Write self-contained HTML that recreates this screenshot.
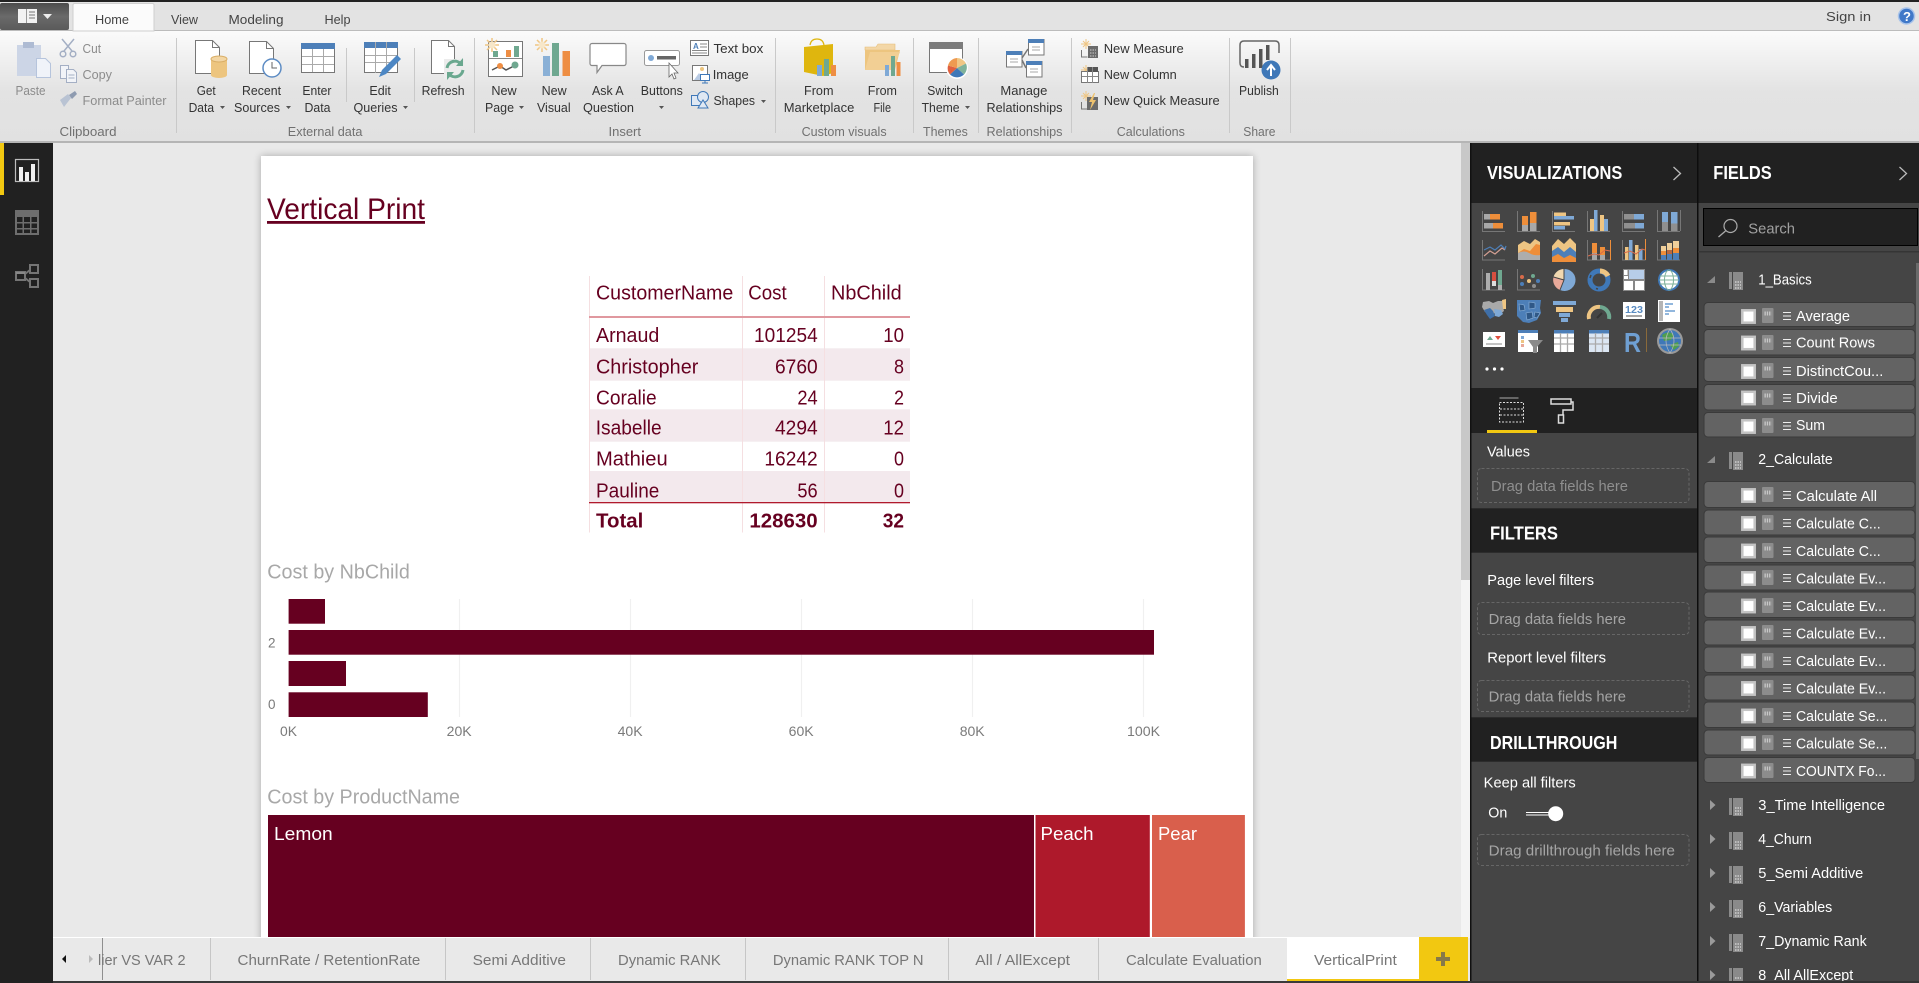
<!DOCTYPE html>
<html lang="en">
<head>
<meta charset="utf-8">
<title>Vertical Print</title>
<style>
html,body{margin:0;padding:0;width:1919px;height:983px;overflow:hidden;background:#e9e9e9}
svg{display:block;font-family:"Liberation Sans",sans-serif}
text{white-space:pre}
.t{font-size:13px;fill:#333}
.tab{font-size:13px;fill:#444}
.dis{font-size:13px;fill:#8c8c8c}
.g{font-size:13px;fill:#707070}
.tb{font-size:20px;fill:#660020}
.tbb{font-size:20px;fill:#660020;font-weight:bold}
.vt{font-size:20px;fill:#a8a8a8}
.ax{font-size:14px;fill:#7a7a7a}
.tm{font-size:18px;fill:#fff}
.pt{font-size:14.5px;fill:#777}
.h{font-size:18px;fill:#fff;font-weight:bold}
.w{font-size:14.5px;fill:#fff}
.d{font-size:14.5px;fill:#a5a5a5}
.f{font-size:14.5px;fill:#fff}
.l{stroke:#777;fill:none}
</style>
</head>
<body>
<svg width="1919" height="983" viewBox="0 0 1919 983" xmlns="http://www.w3.org/2000/svg">
<defs>
<linearGradient id="rib" x1="0" y1="0" x2="0" y2="1"><stop offset="0" stop-color="#fbfbfb"/><stop offset=".55" stop-color="#e3e3e3"/><stop offset="1" stop-color="#e1e1e1"/></linearGradient>
<linearGradient id="app" x1="0" y1="0" x2="0" y2="1"><stop offset="0" stop-color="#4c4c4c"/><stop offset=".5" stop-color="#6a6a6a"/><stop offset="1" stop-color="#5a5a5a"/></linearGradient>
<filter id="sh" x="-5%" y="-5%" width="110%" height="110%"><feGaussianBlur stdDeviation="4"/></filter>
<clipPath id="fc"><rect x="1698" y="252" width="221" height="729"/></clipPath>
<clipPath id="pc"><rect x="53" y="143" width="1408" height="794"/></clipPath>
</defs>

<!-- top bars -->
<rect width="1919" height="983" fill="#e9e9e9"/>
<rect width="1919" height="31" fill="#e3e3e3"/>
<rect width="1919" height="2" fill="#222"/>
<rect y="30" width="1919" height="1" fill="#bcbcbc"/>
<rect y="31" width="1919" height="110" fill="url(#rib)"/>
<rect y="141" width="1919" height="2" fill="#b5b5b5"/>
<rect x="0" y="3" width="69" height="27" rx="2" fill="url(#app)"/>
<rect x="18" y="9" width="19" height="14" fill="#f2f2f2"/>
<rect x="26" y="9" width="1" height="14" fill="#999"/>
<path d="M29 12h6M29 15h6M29 18h6" stroke="#777"/>
<path d="M43 14h9l-4.500 5z" fill="#eee"/>
<path d="M73 31V5q0-1.500 1.500-1.500h78q1.500 0 1.500 1.500v26z" fill="#fbfbfb" stroke="#cfcfcf"/>
<text class="tab" x="95" y="28" textLength="34" lengthAdjust="spacingAndGlyphs" transform="translate(0,-4)">Home</text>
<text class="tab" x="171" y="24" textLength="27" lengthAdjust="spacingAndGlyphs">View</text>
<text class="tab" x="228.500" y="24" textLength="55" lengthAdjust="spacingAndGlyphs">Modeling</text>
<text class="tab" x="324.500" y="24" textLength="26" lengthAdjust="spacingAndGlyphs">Help</text>
<text class="tab" x="1826" y="21" textLength="45" lengthAdjust="spacingAndGlyphs">Sign in</text>
<circle cx="1906.500" cy="16" r="8" fill="#3f78c8" stroke="#a9c4ea" stroke-width="1.500"/>
<text x="1903" y="21" font-size="13" font-weight="bold" fill="#fff">?</text>

<!-- ribbon separators -->
<g stroke="#c9c9c9">
<path d="M176.500 38V133M474.500 38V133M775.500 38V133M913.500 38V133M978.500 38V133M1071.500 38V133M1229.500 38V133M1290.500 38V133M346.500 48V102M414.500 48V102"/>
</g>

<!-- ribbon labels -->
<text class="dis" x="15.500" y="95" textLength="30" lengthAdjust="spacingAndGlyphs">Paste</text>
<text class="dis" x="82.500" y="53" textLength="18.500" lengthAdjust="spacingAndGlyphs">Cut</text>
<text class="dis" x="82.500" y="79" textLength="29.500" lengthAdjust="spacingAndGlyphs">Copy</text>
<text class="dis" x="82.500" y="105" textLength="84" lengthAdjust="spacingAndGlyphs">Format Painter</text>
<text class="g" x="59.500" y="136" textLength="57" lengthAdjust="spacingAndGlyphs">Clipboard</text>
<text class="t" x="196.700" y="95" textLength="19" lengthAdjust="spacingAndGlyphs">Get</text>
<text class="t" x="188.600" y="112" textLength="25.500" lengthAdjust="spacingAndGlyphs">Data</text>
<text class="t" x="242" y="95" textLength="39" lengthAdjust="spacingAndGlyphs">Recent</text>
<text class="t" x="234" y="112" textLength="46" lengthAdjust="spacingAndGlyphs">Sources</text>
<text class="t" x="302.400" y="95" textLength="29" lengthAdjust="spacingAndGlyphs">Enter</text>
<text class="t" x="304.500" y="112" textLength="26" lengthAdjust="spacingAndGlyphs">Data</text>
<text class="t" x="369.400" y="95" textLength="21.500" lengthAdjust="spacingAndGlyphs">Edit</text>
<text class="t" x="353.500" y="112" textLength="44" lengthAdjust="spacingAndGlyphs">Queries</text>
<text class="t" x="421.600" y="95" textLength="43" lengthAdjust="spacingAndGlyphs">Refresh</text>
<text class="t" x="491.400" y="95" textLength="25.300" lengthAdjust="spacingAndGlyphs">New</text>
<text class="t" x="485" y="112" textLength="29" lengthAdjust="spacingAndGlyphs">Page</text>
<text class="t" x="541.600" y="95" textLength="25" lengthAdjust="spacingAndGlyphs">New</text>
<text class="t" x="537" y="112" textLength="33.600" lengthAdjust="spacingAndGlyphs">Visual</text>
<text class="t" x="592" y="95" textLength="31.700" lengthAdjust="spacingAndGlyphs">Ask A</text>
<text class="t" x="583" y="112" textLength="51" lengthAdjust="spacingAndGlyphs">Question</text>
<text class="g" x="287.800" y="136" textLength="74.600" lengthAdjust="spacingAndGlyphs">External data</text>
<text class="g" x="608.500" y="136" textLength="32.500" lengthAdjust="spacingAndGlyphs">Insert</text>
<text class="t" x="640.800" y="95" textLength="42" lengthAdjust="spacingAndGlyphs">Buttons</text>
<text class="t" x="713.500" y="53" textLength="49.800" lengthAdjust="spacingAndGlyphs">Text box</text>
<text class="t" x="712.700" y="79" textLength="36" lengthAdjust="spacingAndGlyphs">Image</text>
<text class="t" x="713.500" y="105" textLength="41.500" lengthAdjust="spacingAndGlyphs">Shapes</text>
<text class="t" x="804" y="95" textLength="29.500" lengthAdjust="spacingAndGlyphs">From</text>
<text class="t" x="783.700" y="112" textLength="70.600" lengthAdjust="spacingAndGlyphs">Marketplace</text>
<text class="t" x="867.800" y="95" textLength="29.200" lengthAdjust="spacingAndGlyphs">From</text>
<text class="t" x="873.500" y="112" textLength="17.500" lengthAdjust="spacingAndGlyphs">File</text>
<text class="g" x="801.600" y="136" textLength="85" lengthAdjust="spacingAndGlyphs">Custom visuals</text>
<text class="t" x="927.300" y="95" textLength="35.600" lengthAdjust="spacingAndGlyphs">Switch</text>
<text class="t" x="921.600" y="112" textLength="38" lengthAdjust="spacingAndGlyphs">Theme</text>
<text class="g" x="923" y="136" textLength="44.800" lengthAdjust="spacingAndGlyphs">Themes</text>
<text class="t" x="1000.400" y="95" textLength="47" lengthAdjust="spacingAndGlyphs">Manage</text>
<text class="t" x="986.500" y="112" textLength="76" lengthAdjust="spacingAndGlyphs">Relationships</text>
<text class="g" x="986.500" y="136" textLength="76" lengthAdjust="spacingAndGlyphs">Relationships</text>
<text class="t" x="1103.700" y="53" textLength="80" lengthAdjust="spacingAndGlyphs">New Measure</text>
<text class="t" x="1103.700" y="79" textLength="73" lengthAdjust="spacingAndGlyphs">New Column</text>
<text class="t" x="1103.700" y="105" textLength="116" lengthAdjust="spacingAndGlyphs">New Quick Measure</text>
<text class="g" x="1116.700" y="136" textLength="68.200" lengthAdjust="spacingAndGlyphs">Calculations</text>
<text class="t" x="1239" y="95" textLength="39.800" lengthAdjust="spacingAndGlyphs">Publish</text>
<text class="g" x="1243.300" y="136" textLength="32.200" lengthAdjust="spacingAndGlyphs">Share</text>
<!-- dropdown arrows -->
<g fill="#555">
<path d="M220 106h5l-2.500 3zM286 106h5l-2.500 3zM403 106h5l-2.500 3zM519 106h5l-2.500 3zM659 106h5l-2.500 3zM761 100h5l-2.500 3zM965 106h5l-2.500 3z"/>
</g>

<!-- Paste / Cut / Copy / Painter icons -->
<rect x="17" y="45" width="24" height="31" fill="#ccd5e6"/>
<rect x="23" y="42" width="11" height="6" fill="#aebbd3"/>
<path d="M36.500 58.500h9l5 5v14h-14z" fill="#f0f3f9" stroke="#b6c4dc"/>
<g stroke="#a4afc4" fill="none" stroke-width="1.500"><path d="M62 39l10 12M74 39l-10 12"/><circle cx="63" cy="54" r="2.800"/><circle cx="73" cy="54" r="2.800"/></g>
<g stroke="#a4afc4" fill="#f2f4f8"><path d="M60.500 65.500h8v13h-8z"/><path d="M66.500 69.500h7l3 3v10h-10z"/><path d="M68.500 75h6M68.500 78h6" fill="none"/></g>
<path d="M60 100l8-6 3 4-7 9z" fill="#b9c3d3"/><path d="M69 95l6-4 2 3-5 5z" fill="#8e9bb0"/>

<!-- Get Data -->
<path d="M195.500 40.500h17l7 7v26h-24z" fill="#fff" stroke="#777"/>
<path d="M212.500 40.500v7h7" fill="none" stroke="#777"/>
<path d="M211 59v16a8 3 0 0 0 16 0V59z" fill="#edc57f"/><ellipse cx="219" cy="59" rx="8" ry="3" fill="#f3d6a4" stroke="#d9ae66"/>
<!-- Recent -->
<path d="M249.500 41.500h17l7 7v25h-24z" fill="#fff" stroke="#777"/>
<path d="M266.500 41.500v7h7" fill="none" stroke="#777"/>
<circle cx="272" cy="68" r="9" fill="#fff" stroke="#5d8cc4" stroke-width="1.500"/>
<path d="M272 62v6h5" fill="none" stroke="#666"/>
<!-- Enter Data -->
<rect x="301.500" y="43.500" width="33" height="29" fill="#fff" stroke="#777"/>
<rect x="301" y="43" width="34" height="6" fill="#4d7fb8"/>
<path d="M312.500 49v23M323.500 49v23M302 56.500h32M302 64.500h32" stroke="#aaa"/>
<!-- Edit Queries -->
<rect x="364.500" y="42.500" width="33" height="30" fill="#fff" stroke="#777"/>
<rect x="364" y="42" width="34" height="6" fill="#4d7fb8"/>
<path d="M375.500 48v25M386.500 48v25M365 55.500h32M365 62.500h32M375.500 42v6M386.500 42v6" stroke="#aaa"/>
<path d="M379 77l3-7 15-15 4 4-15 15z" fill="#4d87c4"/>
<!-- Refresh -->
<path d="M431.500 40.500h17l6 6v27h-23z" fill="#fff" stroke="#777"/>
<path d="M448.500 40.500v6h6" fill="none" stroke="#777"/>
<rect x="444" y="59" width="20" height="20" fill="#ececec"/>
<path d="M447 68a8 8 0 0 1 14-4M463 70a8 8 0 0 1-14 4" fill="none" stroke="#6aa88f" stroke-width="3"/>
<path d="M463 58v8h-7zM447 80v-8h7z" fill="#6aa88f"/>
<!-- New Page -->
<rect x="488.500" y="41.500" width="34" height="35" fill="#fff" stroke="#777"/>
<path d="M489 58.500h33" stroke="#888"/>
<rect x="493" y="51" width="5" height="6" fill="#6fa890"/><rect x="506" y="50" width="5" height="7" fill="#ee8e44"/><rect x="514" y="46" width="5" height="11" fill="#6fa890"/>
<path d="M492 70l8-4 6 4 8-4" fill="none" stroke="#555" stroke-width="1.500"/>
<circle cx="500" cy="66" r="3" fill="#ee8e44"/><circle cx="515" cy="65" r="3.500" fill="#6fa890"/>
<g stroke="#f0c684" stroke-width="1.500"><path d="M492 38v14M485 45h14M487 40l10 10M497 40l-10 10"/></g><circle cx="492" cy="45" r="3.500" fill="#f7e7c9"/>
<!-- New Visual -->
<rect x="543" y="56" width="7" height="20" fill="#8ab0d6"/><rect x="552" y="43" width="7" height="33" fill="#6fa890"/><rect x="562.500" y="51" width="7.500" height="25" fill="#ee8e44"/>
<g stroke="#f0c684" stroke-width="1.500"><path d="M542 38v14M535 45h14M537 40l10 10M547 40l-10 10"/></g><circle cx="542" cy="45" r="3.500" fill="#f7e7c9"/>
<!-- Ask -->
<path d="M592 43.500h32a2 2 0 0 1 2 2v18a2 2 0 0 1-2 2h-22l-5 7v-7h-5a2 2 0 0 1-2-2v-18a2 2 0 0 1 2-2z" fill="#fff" stroke="#888" stroke-width="1.200"/>
<!-- Buttons -->
<rect x="644.500" y="50.500" width="35" height="15" rx="2" fill="#fff" stroke="#999"/>
<circle cx="651" cy="58" r="3" fill="#7fa9d6"/><rect x="657" y="56" width="19" height="3.500" fill="#666"/>
<path d="M669 63v14l3-3 2 5 2-1-2-5h4z" fill="#fff" stroke="#666" stroke-width=".8"/>
<!-- text box -->
<rect x="690.500" y="40.500" width="18" height="15" fill="#fff" stroke="#777"/>
<text x="693" y="49" font-size="8" font-weight="bold" fill="#4d7fb8">A</text>
<path d="M700 44h7M700 47h7M692 50.500h15M692 53h15" stroke="#888"/>
<!-- image -->
<rect x="692.500" y="65.500" width="15" height="15" fill="#fff" stroke="#777"/>
<path d="M694 80l5-7 5 7z" fill="#b9cbe4"/><circle cx="702" cy="69" r="2" fill="#edc57f"/>
<rect x="700.500" y="74.500" width="9" height="6" fill="#fff" stroke="#3f78b8"/><path d="M705 81v2M702 83h6" stroke="#3f78b8"/>
<!-- shapes -->
<rect x="691.500" y="95.500" width="10" height="10" fill="#dfe8f3" stroke="#3f78b8"/>
<circle cx="703" cy="97" r="5.500" fill="#dfe8f3" stroke="#3f78b8"/>
<path d="M698 108l5-8 5 8z" fill="#dfe8f3" stroke="#3f78b8"/>
<!-- Marketplace -->
<path d="M810 45q1-6 7-6t7 6" fill="none" stroke="#dfb60e" stroke-width="1.200"/>
<path d="M804 47l29-3v29l-10 3-19-4z" fill="#dfb60e"/>
<rect x="817" y="65" width="5" height="11" fill="#7fa9d6"/><rect x="824" y="59" width="5" height="17" fill="#6fa890"/><rect x="831" y="65" width="5" height="11" fill="#ee8e44"/>
<!-- Folder -->
<path d="M865 47h11l2-3h17v6h-30z" fill="#f3d7a7" stroke="#e5bd79" stroke-width=".6"/>
<path d="M865 70V50l30 0h5l-5 20z" fill="#edc57f"/><path d="M870 52h30l-8 18h-27z" fill="#f2cf94"/>
<rect x="885" y="65" width="4" height="11" fill="#7fa9d6"/><rect x="891" y="56" width="4" height="20" fill="#6fa890"/><rect x="896.500" y="62" width="4" height="14" fill="#ee8e44"/>
<!-- Theme -->
<rect x="929.500" y="42.500" width="33" height="30" fill="#fff" stroke="#777"/>
<rect x="929" y="42" width="34" height="7" fill="#7c7c7c"/>
<circle cx="957" cy="68" r="11" fill="#fff"/>
<path d="M957 68V58a10 10 0 0 1 9 5.500z" fill="#f0c684"/><path d="M957 68l9-4.500a10 10 0 0 1-2 11z" fill="#7fb29b"/><path d="M957 68l7 6.500a10 10 0 0 1-14 0z" fill="#3f78b8"/><path d="M957 68l-7 6.500a10 10 0 0 1-2-9z" fill="#e0603f"/><path d="M957 68l-9-2.500a10 10 0 0 1 9-7.500z" fill="#ee9a50"/>
<!-- Relationships -->
<g fill="#fff" stroke="#777">
<rect x="1028.500" y="39.500" width="15.500" height="15.500"/>
<rect x="1006.500" y="51.500" width="15.500" height="15.500"/>
<rect x="1026.500" y="61.500" width="15.500" height="15.500"/>
</g>
<rect x="1028" y="39" width="16" height="4" fill="#4d7fb8"/><rect x="1006" y="51" width="16" height="4" fill="#4d7fb8"/><rect x="1026" y="61" width="16" height="4" fill="#4d7fb8"/>
<path d="M1022 58l6-9M1022 60l4 8" stroke="#777" stroke-width="1.500"/>
<path d="M1032 47h8M1032 50h8M1010 59h8M1010 62h8M1030 69h8M1030 72h8" stroke="#aaa"/>
<!-- New measure icons -->
<g>
<g id="sun1" stroke="#efc684"><path d="M1086 39v10M1081 44h10M1083 41l6 6M1089 41l-6 6"/></g>
<path d="M1081.500 50v7h6" fill="none" stroke="#777"/>
<rect x="1088" y="46" width="10" height="12" fill="#6b6b6b"/><path d="M1090 50h6M1090 53h6M1090 56h6" stroke="#ccc" stroke-dasharray="1.500 1"/>
<g stroke="#efc684"><path d="M1086 65v10M1081 70h10M1083 67l6 6M1089 67l-6 6"/></g>
<rect x="1081.500" y="71.500" width="17" height="11" fill="#fff" stroke="#777"/><rect x="1087" y="67" width="11" height="5" fill="#555"/><path d="M1087.500 67v16M1092.500 67v16M1082 76.500h16" stroke="#888"/>
<g stroke="#efc684"><path d="M1086 91v10M1081 96h10M1083 93l6 6M1089 93l-6 6"/></g>
<path d="M1081.500 102v7h6" fill="none" stroke="#777"/>
<rect x="1087" y="97" width="11" height="13" fill="#6b6b6b"/><path d="M1094 93l-5 9h3l-2 8 6-10h-3l2-7z" fill="#eec26e"/>
</g>
<!-- Publish -->
<path d="M1244 67q-4 0-4-4V45q0-4 4-4h31q4 0 4 4v8" fill="none" stroke="#666" stroke-width="1.500"/>
<g fill="#555"><rect x="1245" y="59" width="3.500" height="9"/><rect x="1252" y="54" width="3.500" height="14"/><rect x="1259" y="49" width="3.500" height="19"/><rect x="1266" y="45" width="3.500" height="15"/></g>
<circle cx="1271" cy="70" r="9.500" fill="#3f78b8"/><path d="M1271 76v-10M1267 70l4-5 4 5" stroke="#fff" stroke-width="2" fill="none"/>

<!-- Left rail -->
<rect x="0" y="143" width="53" height="840" fill="#212121"/>
<rect x="0" y="143" width="4" height="52" fill="#f2c811"/>
<rect x="15.500" y="159.500" width="23" height="22" fill="none" stroke="#bdbdbd" stroke-width="1.200"/>
<rect x="19" y="167" width="4" height="14" fill="#f0f0f0"/><rect x="25" y="172" width="4" height="9" fill="#f0f0f0"/><rect x="31" y="164" width="4" height="17" fill="#f0f0f0"/>
<rect x="15" y="210" width="24" height="25" fill="#6e6e6e"/>
<g fill="#212121"><rect x="17" y="217" width="5.500" height="5"/><rect x="24" y="217" width="6" height="5"/><rect x="31.500" y="217" width="5.500" height="5"/><rect x="17" y="223.500" width="5.500" height="4.500"/><rect x="24" y="223.500" width="6" height="4.500"/><rect x="31.500" y="223.500" width="5.500" height="4.500"/><rect x="17" y="229.500" width="5.500" height="3.500"/><rect x="24" y="229.500" width="6" height="3.500"/><rect x="31.500" y="229.500" width="5.500" height="3.500"/></g>
<g fill="none" stroke="#757575" stroke-width="2"><rect x="16" y="272" width="9" height="8"/><rect x="30" y="265" width="8" height="8"/><rect x="30" y="279" width="8" height="8"/><path d="M25 274l5-4M25 278l5 4"/></g>
<rect x="16" y="272" width="9" height="2" fill="#888"/>

<!-- Canvas -->
<rect x="261" y="156" width="992" height="800" fill="#000" opacity=".28" filter="url(#sh)" clip-path="url(#pc)"/>
<rect x="261" y="156" width="992" height="781" fill="#fff"/>
<rect x="1461" y="143" width="10" height="437" fill="#c8c8c8"/>
<rect x="1461" y="580" width="10" height="358" fill="#f4f4f4"/>

<!-- Title -->
<text x="267" y="219" font-size="30" fill="#660020" textLength="158" lengthAdjust="spacingAndGlyphs">Vertical Print</text>
<rect x="267" y="221" width="158" height="2.800" fill="#660020"/>

<!-- Table -->
<rect x="589" y="348.300" width="321" height="32.400" fill="#f3e9ed"/>
<rect x="589" y="409.300" width="321" height="32.400" fill="#f3e9ed"/>
<rect x="589" y="471" width="321" height="31.300" fill="#f3e9ed"/>
<path d="M589.500 276V532.500M742.500 276V532.500M824.500 276V532.500" stroke="#f5dfe1"/>
<rect x="589" y="316" width="321" height="2" fill="#e0989f"/>
<rect x="589" y="502" width="321" height="1.300" fill="#b01a2d"/>
<text class="tb" x="596" y="299.300" textLength="137.300" lengthAdjust="spacingAndGlyphs">CustomerName</text>
<text class="tb" x="748.300" y="299.300" textLength="38.400" lengthAdjust="spacingAndGlyphs">Cost</text>
<text class="tb" x="831" y="299.300" textLength="70.700" lengthAdjust="spacingAndGlyphs">NbChild</text>
<text class="tb" x="596" y="342" textLength="63.300" lengthAdjust="spacingAndGlyphs">Arnaud</text>
<text class="tb" x="596" y="373.300" textLength="102.300" lengthAdjust="spacingAndGlyphs">Christopher</text>
<text class="tb" x="596" y="404.300" textLength="60.700" lengthAdjust="spacingAndGlyphs">Coralie</text>
<text class="tb" x="595.700" y="434.300" textLength="66" lengthAdjust="spacingAndGlyphs">Isabelle</text>
<text class="tb" x="596" y="465.700" textLength="71.700" lengthAdjust="spacingAndGlyphs">Mathieu</text>
<text class="tb" x="596" y="497.700" textLength="63.300" lengthAdjust="spacingAndGlyphs">Pauline</text>
<text class="tbb" x="596" y="527.300" textLength="47.300" lengthAdjust="spacingAndGlyphs">Total</text>
<text class="tb" x="754" y="342" textLength="63.700" lengthAdjust="spacingAndGlyphs">101254</text>
<text class="tb" x="775" y="373.300" textLength="42.700" lengthAdjust="spacingAndGlyphs">6760</text>
<text class="tb" x="797.400" y="404.300" textLength="20.300" lengthAdjust="spacingAndGlyphs">24</text>
<text class="tb" x="775" y="434.300" textLength="42.700" lengthAdjust="spacingAndGlyphs">4294</text>
<text class="tb" x="764.400" y="465.700" textLength="53.300" lengthAdjust="spacingAndGlyphs">16242</text>
<text class="tb" x="797.400" y="497.700" textLength="20.300" lengthAdjust="spacingAndGlyphs">56</text>
<text class="tbb" x="749.400" y="527.300" textLength="68.300" lengthAdjust="spacingAndGlyphs">128630</text>
<text class="tb" x="883.300" y="342" textLength="20.700" lengthAdjust="spacingAndGlyphs">10</text>
<text class="tb" x="894" y="373.300" textLength="10" lengthAdjust="spacingAndGlyphs">8</text>
<text class="tb" x="894" y="404.300" textLength="10" lengthAdjust="spacingAndGlyphs">2</text>
<text class="tb" x="883.300" y="434.300" textLength="20.700" lengthAdjust="spacingAndGlyphs">12</text>
<text class="tb" x="894" y="465.700" textLength="10" lengthAdjust="spacingAndGlyphs">0</text>
<text class="tb" x="894" y="497.700" textLength="10" lengthAdjust="spacingAndGlyphs">0</text>
<text class="tbb" x="882.700" y="527.300" textLength="21.300" lengthAdjust="spacingAndGlyphs">32</text>

<!-- Bar chart -->
<text class="vt" x="267.300" y="578.300" textLength="142.500" lengthAdjust="spacingAndGlyphs">Cost by NbChild</text>
<path d="M459.500 599V717M630.500 599V717M801.500 599V717M972.500 599V717M1143.500 599V717" stroke="#f0f0f0" stroke-width="1.200"/>
<g fill="#660020">
<rect x="288.600" y="599" width="36.400" height="24.700"/>
<rect x="288.600" y="630" width="865.400" height="24.700"/>
<rect x="288.600" y="661" width="57.400" height="25"/>
<rect x="288.600" y="692.300" width="139.200" height="24.700"/>
</g>
<text class="ax" x="268" y="647.300" textLength="7.500" lengthAdjust="spacingAndGlyphs">2</text>
<text class="ax" x="268" y="709" textLength="7.500" lengthAdjust="spacingAndGlyphs">0</text>
<text class="ax" x="280" y="736" textLength="17" lengthAdjust="spacingAndGlyphs">0K</text>
<text class="ax" x="446.700" y="736" textLength="25" lengthAdjust="spacingAndGlyphs">20K</text>
<text class="ax" x="617.600" y="736" textLength="25" lengthAdjust="spacingAndGlyphs">40K</text>
<text class="ax" x="788.700" y="736" textLength="25" lengthAdjust="spacingAndGlyphs">60K</text>
<text class="ax" x="959.700" y="736" textLength="25" lengthAdjust="spacingAndGlyphs">80K</text>
<text class="ax" x="1127" y="736" textLength="33" lengthAdjust="spacingAndGlyphs">100K</text>

<!-- Treemap -->
<text class="vt" x="267.300" y="803.300" textLength="192.700" lengthAdjust="spacingAndGlyphs">Cost by ProductName</text>
<rect x="268" y="815" width="766" height="122" fill="#660020"/>
<rect x="1035.500" y="815" width="114.300" height="122" fill="#ae192b"/>
<rect x="1152" y="815" width="92.900" height="122" fill="#d95f4c"/>
<text class="tm" x="274" y="840" textLength="58.700" lengthAdjust="spacingAndGlyphs">Lemon</text>
<text class="tm" x="1040.500" y="840" textLength="53" lengthAdjust="spacingAndGlyphs">Peach</text>
<text class="tm" x="1158" y="840" textLength="39" lengthAdjust="spacingAndGlyphs">Pear</text>

<!-- Tabs -->
<rect x="53" y="937" width="1415" height="44" fill="#e9e9e9"/>
<rect x="53" y="937" width="1415" height="1" fill="#fff"/>
<path d="M210.500 938V980M445.500 938V980M590.500 938V980M745.500 938V980M948.500 938V980M1098.500 938V980" stroke="#c6c6c6"/>
<path d="M102.500 938V980" stroke="#8f8f8f"/>
<rect x="1287" y="937" width="132" height="42" fill="#fff"/>
<rect x="1287" y="979" width="132" height="2" fill="#f2c811"/>
<rect x="1419" y="937" width="49" height="44" fill="#f2c811"/>
<path d="M1443 952v14M1436 959h14" stroke="#86794a" stroke-width="4"/>
<path d="M66 955v8l-4-4z" fill="#111"/>
<path d="M89 955v8l4-4z" fill="#bbb"/>
<text class="pt" x="98" y="965" textLength="87.600" lengthAdjust="spacingAndGlyphs">lier VS VAR 2</text>
<text class="pt" x="237.500" y="965" textLength="182.800" lengthAdjust="spacingAndGlyphs">ChurnRate / RetentionRate</text>
<text class="pt" x="472.600" y="965" textLength="93.400" lengthAdjust="spacingAndGlyphs">Semi Additive</text>
<text class="pt" x="618" y="965" textLength="102.800" lengthAdjust="spacingAndGlyphs">Dynamic RANK</text>
<text class="pt" x="772.900" y="965" textLength="150.600" lengthAdjust="spacingAndGlyphs">Dynamic RANK TOP N</text>
<text class="pt" x="975.300" y="965" textLength="94.700" lengthAdjust="spacingAndGlyphs">All / AllExcept</text>
<text class="pt" x="1126" y="965" textLength="135.800" lengthAdjust="spacingAndGlyphs">Calculate Evaluation</text>
<text class="pt" x="1314" y="965" textLength="82.800" lengthAdjust="spacingAndGlyphs">VerticalPrint</text>

<!-- Visualizations pane -->
<rect x="1471" y="143" width="448" height="840" fill="#454545"/>
<rect x="1471" y="143" width="226" height="60" fill="#212121"/>
<rect x="1698" y="143" width="221" height="60" fill="#212121"/>
<rect x="1471" y="388" width="226" height="45" fill="#212121"/>
<rect x="1471" y="508.300" width="226" height="44.400" fill="#212121"/>
<rect x="1471" y="717.300" width="226" height="44.400" fill="#212121"/>
<rect x="1470" y="143" width="1.500" height="840" fill="#111"/>
<rect x="1697" y="143" width="1.500" height="840" fill="#0d0d0d"/>
<text class="h" x="1487" y="179" textLength="135.300" lengthAdjust="spacingAndGlyphs">VISUALIZATIONS</text>
<text class="h" x="1713.300" y="179" textLength="58.400" lengthAdjust="spacingAndGlyphs">FIELDS</text>
<path d="M1673.500 167l7 6.500-7 6.500M1899.500 167l7 6.500-7 6.500" fill="none" stroke="#bbb" stroke-width="1.300"/>

<!-- viz icons -->
<g transform="translate(1494,222)"><path d="M-11.500-11V9.500H11" class="l"/><rect x="-10" y="-8" width="6" height="5.500" fill="#a8a8a8"/><rect x="-4" y="-8" width="10" height="5.500" fill="#ee8e3a"/><rect x="-10" y="1" width="9" height="5.500" fill="#a8a8a8"/><rect x="-1" y="1" width="10" height="5.500" fill="#ee8e3a"/></g>
<g transform="translate(1529,222)"><path d="M-11.500-11V9.500H11" class="l"/><rect x="-7" y="-6" width="6" height="9" fill="#ee8e3a"/><rect x="-7" y="3" width="6" height="6" fill="#a8a8a8"/><rect x="1" y="-10" width="6.500" height="11" fill="#ee8e3a"/><rect x="1" y="1" width="6.500" height="8" fill="#a8a8a8"/></g>
<g transform="translate(1564,222)"><path d="M-11.500-11V9.500H11" class="l"/><rect x="-10" y="-9.500" width="12" height="3.500" fill="#eec583"/><rect x="-10" y="-6" width="20" height="3.500" fill="#7fa9d6"/><rect x="-10" y="0" width="16" height="3.500" fill="#eec583"/><rect x="-10" y="4" width="11" height="3.500" fill="#7fa9d6"/></g>
<g transform="translate(1599,222)"><path d="M-11.500-11V9.500H11" class="l"/><rect x="-9" y="-3" width="4" height="12" fill="#eec583"/><rect x="-5" y="-12" width="3.500" height="21" fill="#7fa9d6"/><rect x="1" y="-7" width="4" height="16" fill="#eec583"/><rect x="5" y="-3" width="4" height="12" fill="#7fa9d6"/></g>
<g transform="translate(1634,222)"><path d="M-11.500-11V9.500H11" class="l"/><rect x="-10" y="-8" width="10" height="5.500" fill="#8f8f8f"/><rect x="0" y="-8" width="10" height="5.500" fill="#7fa9d6"/><rect x="-10" y="1" width="11" height="5.500" fill="#8f8f8f"/><rect x="1" y="1" width="9" height="5.500" fill="#7fa9d6"/></g>
<g transform="translate(1669,222)"><path d="M-11.500-12V9.500H11M11.500-12V9" class="l"/><rect x="-7" y="-10" width="6" height="10" fill="#7fa9d6"/><rect x="-7" y="0" width="6" height="9" fill="#8f8f8f"/><rect x="2" y="-10" width="6.500" height="11.500" fill="#7fa9d6"/><rect x="2" y="1.500" width="6.500" height="7.500" fill="#8f8f8f"/></g>

<g transform="translate(1494,250)"><path d="M-11.500-10V10H11" class="l"/><path d="M-10 6l6-5 5 3 7-6 3 2" fill="none" stroke="#d4a093" stroke-width="1.200"/><path d="M-10 0l6-3 5 3 6-5 4 4 1-3" fill="none" stroke="#4d7fb8" stroke-width="1.200"/></g>
<g transform="translate(1529,250)"><path d="M-11-5l6-4 6 3 5-5 5 3V10H-11z" fill="#eec583"/><path d="M-11 3l6-4 6 2 6-7 4 1V10H-11z" fill="#ee8e3a"/><path d="M-11 3q6-3 11 0T11 5V10H-11z" fill="#adadad"/></g>
<g transform="translate(1564,250)"><path d="M-12-4l6-7 6 5 6-6 6 6V12H-12z" fill="#eec583"/><path d="M-12 1l6-4 6 5 6-5 6 5v9H-12z" fill="#4d7fb8"/><path d="M-12 7l6-3 6 4 6-3 6 3v4H-12z" fill="#ee8e3a"/></g>
<g transform="translate(1599,250)"><path d="M-11.500-10V10H11.500V-10" class="l"/><rect x="-7" y="-7" width="5" height="10" fill="#ee8e3a"/><rect x="-7" y="3" width="5" height="7" fill="#a8a8a8"/><rect x="1" y="-3" width="5" height="8" fill="#ee8e3a"/><rect x="1" y="5" width="5" height="5" fill="#a8a8a8"/><path d="M-11 6l6-2 5 1 6-5 5 1" fill="none" stroke="#d86b4a"/><path d="M11.500-10V10" stroke="#ee8e3a"/></g>
<g transform="translate(1634,250)"><path d="M-11.500-10V10H11.500" class="l"/><rect x="-9" y="-3" width="3.500" height="13" fill="#eec583"/><rect x="-5" y="-10" width="3.500" height="20" fill="#7fa9d6"/><rect x="1" y="-5" width="3.500" height="15" fill="#eec583"/><rect x="5" y="-1" width="3.500" height="11" fill="#7fa9d6"/><path d="M-10 3l6-2 6 3 6-5 3 1" fill="none" stroke="#d86b4a"/><path d="M11.500-11V10" stroke="#ee8e3a"/></g>
<g transform="translate(1669,250)"><path d="M-11.500-10V10H11" class="l"/><rect x="-8" y="-4" width="5" height="5" fill="#f0cf9a"/><rect x="-2" y="-7" width="5" height="7" fill="#f0cf9a"/><rect x="4" y="-9" width="6" height="7" fill="#f0cf9a"/><rect x="-8" y="1" width="5" height="4" fill="#ee8e3a"/><rect x="-2" y="0" width="5" height="4" fill="#b9693f"/><rect x="4" y="-2" width="6" height="5" fill="#ee8e3a"/><rect x="-8" y="5" width="5" height="5" fill="#4d7fb8"/><rect x="-2" y="4" width="5" height="6" fill="#4d7fb8"/><rect x="4" y="3" width="6" height="7" fill="#4d7fb8"/></g>

<g transform="translate(1494,280)"><path d="M-11.500-11V10H11" class="l"/><rect x="-8" y="-7" width="4" height="17" fill="#adadad"/><path d="M-2-8h4v9h-4z" fill="#d84f3f"/><rect x="-2" y="1" width="4" height="5" fill="#ddd"/><rect x="4" y="-10" width="4" height="15" fill="#6fa890"/><rect x="4" y="5" width="4" height="5" fill="#adadad"/></g>
<g transform="translate(1529,280)"><path d="M-11.500-11V10H11" class="l"/><circle cx="-7" cy="-3" r="2" fill="#d86b4a"/><circle cx="-7" cy="4" r="2" fill="#4d7fb8"/><circle cx="0" cy="1" r="2" fill="#eec583"/><circle cx="4" cy="-4" r="2" fill="#6fa890"/><circle cx="5" cy="6" r="2" fill="#8f8f8f"/><circle cx="9" cy="1" r="2" fill="#4d7fb8"/></g>
<g transform="translate(1564,280)"><path d="M0 0V-11A11 11 0 1 1-4 10z" fill="#7fa9d6"/><path d="M0 0L-4 10A11 11 0 0 1-10.500-3z" fill="#e8a99a"/><path d="M0 0L-10.500-3A11 11 0 0 1 0-11z" fill="#f0d8b0"/><path d="M0 0V-11M0 0L-10.500-3M0 0L-4 10" stroke="#454545"/></g>
<g transform="translate(1599,280)"><circle r="9" fill="none" stroke="#3f78b8" stroke-width="5"/><path d="M1-9a9 9 0 0 1 8 5" fill="none" stroke="#eec583" stroke-width="5"/><path d="M-3 8.500l2 .500M-9-2l1-3" stroke="#454545" stroke-width="1.500"/></g>
<g transform="translate(1634,280)"><rect x="-11" y="-11" width="22" height="22" fill="#888"/><rect x="-10" y="-10" width="3.500" height="5" fill="#fff"/><rect x="-5" y="-10" width="15" height="9" fill="#b7cde8"/><rect x="-10" y="-4" width="4" height="3" fill="#fff"/><rect x="-10" y="1" width="9" height="9" fill="#fff"/><rect x="1" y="1" width="9" height="9" fill="#fff"/></g>
<g transform="translate(1669,280)"><circle r="10" fill="#fff" stroke="#3f78b8" stroke-width="2"/><ellipse rx="4.500" ry="10" fill="none" stroke="#7fb29b"/><path d="M-9-4h18M-9 4h18M-10 0h20" stroke="#7fb29b"/></g>

<g transform="translate(1494,311)"><path d="M-11-9l6-1 4 2 5-2h6l2 3-3 3 1 4-4 3-5-1-4 2-6-3-3-5z" fill="#a9a9a9"/><path d="M-10-1l6-2 3 3 2 5-5 3-3-4z" fill="#3f6fa8"/><path d="M0-2l7 1 2 4-4 3-4-1z" fill="#7fa9d6"/><path d="M8-11l4-1v10h-3z" fill="#eec583"/></g>
<g transform="translate(1529,311)"><path d="M-12-11h24l-1 8 1 5-4 7-8 3-6-1-6-6z" fill="#4d7fb8"/><path d="M-10-7l5 1 1 5-5 1zM0-9l6 1v5l-6 1zM-3 2l6-1 1 6-6 2zM6 1l5 1-3 5-3-1z" fill="#2f5887" stroke="#8fb4da" stroke-width=".6"/></g>
<g transform="translate(1564,311)"><rect x="-11" y="-10" width="23" height="4" fill="#7fa9d6"/><rect x="-8" y="-4" width="17" height="5" fill="#eec583"/><rect x="-5" y="2" width="11" height="4" fill="#7fa9d6"/><rect x="-3" y="7" width="7" height="4" fill="#7fa9d6"/></g>
<g transform="translate(1599,311)"><path d="M-10 8a10 10 0 0 1 11-12" fill="none" stroke="#eec583" stroke-width="4"/><path d="M1-4a10 10 0 0 1 9 12" fill="none" stroke="#6fa890" stroke-width="4"/><path d="M-2 7l5-5" stroke="#333" stroke-width="2"/></g>
<g transform="translate(1634,311)"><rect x="-11" y="-9" width="22" height="17" fill="#fff"/><text x="-9" y="2" font-size="10" font-weight="bold" fill="#5a8cc2" textLength="18" lengthAdjust="spacingAndGlyphs">123</text><path d="M-8 5h16" stroke="#888" stroke-width="1.500"/></g>
<g transform="translate(1669,311)"><rect x="-11" y="-11" width="22" height="22" fill="#fff"/><rect x="-10" y="-10" width="4" height="20" fill="#b5b5b5"/><path d="M-4-7h8M-4-4h4M-4 0h10M-4 3h4" stroke="#6f9fd2" stroke-width="1.500"/></g>

<g transform="translate(1494,341)"><rect x="-11" y="-9" width="22" height="15" fill="#fff"/><path d="M-7-1l3-4 3 4z" fill="#6fa890"/><path d="M1-5h6l-3 4z" fill="#e0503f"/><path d="M-8 3h16" stroke="#888"/></g>
<g transform="translate(1529,341)"><rect x="-11" y="-11" width="20" height="22" fill="#fff"/><rect x="-11" y="-11" width="20" height="3" fill="#4d7fb8"/><rect x="-8" y="-5" width="3" height="3" fill="#7fa9d6"/><rect x="-8" y="-1" width="3" height="3" fill="#eec583"/><rect x="-8" y="3" width="3" height="3" fill="#e8a99a"/><path d="M-1-1H14L8 6v6H4V6z" fill="#8a8a8a"/></g>
<g transform="translate(1564,341)"><rect x="-10" y="-11" width="20" height="22" fill="#fff"/><rect x="-10" y="-11" width="20" height="3.500" fill="#4d7fb8"/><path d="M-3.500-8v19M3.500-8v19M-10-3h20M-10 3h20" stroke="#aaa" stroke-width="1.300"/></g>
<g transform="translate(1599,341)"><rect x="-10" y="-11" width="20" height="22" fill="#dbe6f3"/><rect x="-10" y="-11" width="20" height="3.500" fill="#4d7fb8"/><path d="M-3.500-8v19M3.500-8v19M-10-3h20M-10 3h20" stroke="#aaa" stroke-width="1.300"/></g>
<text x="1624" y="352" font-size="28" font-weight="bold" fill="#6f9fd2" textLength="17" lengthAdjust="spacingAndGlyphs">R</text>
<path d="M1646.500 328V352" stroke="#8a6a3a"/>
<g transform="translate(1670,341)"><circle r="12" fill="#3f78b8" stroke="#999" stroke-width="2"/><path d="M-8-6q7-5 12 0l-3 5-7 1z" fill="#4f9f4f"/><path d="M0 4l8-3 1 4-5 4z" fill="#4f9f4f"/><path d="M-11-3h22M-11 4h22M0-12q-8 12 0 24M0-12q8 12 0 24" stroke="#bbb" stroke-width=".7" fill="none"/></g>
<circle cx="1487" cy="369" r="1.600" fill="#fff"/><circle cx="1494.500" cy="369" r="1.600" fill="#fff"/><circle cx="1502" cy="369" r="1.600" fill="#fff"/>

<!-- format tabs -->
<rect x="1487" y="430" width="50" height="3" fill="#f2c811"/>
<g fill="none" stroke="#ddd"><path d="M1499.500 398h19" stroke="#aaa"/><rect x="1499.500" y="402.500" width="24" height="19.500" stroke-dasharray="2 1.500"/><path d="M1500 409h23M1500 415h23" stroke-dasharray="2 1.500"/></g>
<g fill="none" stroke="#ddd" stroke-width="1.500"><rect x="1551" y="399" width="20" height="5"/><path d="M1571 402h2v8h-10v5"/><rect x="1558.500" y="415" width="5" height="8"/></g>

<!-- Pane text -->
<text class="w" x="1487" y="456.700" textLength="43" lengthAdjust="spacingAndGlyphs">Values</text>
<g fill="none" stroke="#666" stroke-dasharray="3 2">
<rect x="1477.500" y="468.500" width="211.500" height="34" rx="4"/>
<rect x="1477.500" y="602.500" width="211.500" height="32" rx="4"/>
<rect x="1477.500" y="680.500" width="211.500" height="31" rx="4"/>
<rect x="1477.500" y="834.500" width="211.500" height="31" rx="4"/>
</g>
<text class="d" x="1491" y="491" textLength="137" lengthAdjust="spacingAndGlyphs" style="fill:#8f8f8f">Drag data fields here</text>
<text class="h" x="1490" y="539.300" textLength="68" lengthAdjust="spacingAndGlyphs">FILTERS</text>
<text class="w" x="1487.300" y="585" textLength="106.700" lengthAdjust="spacingAndGlyphs">Page level filters</text>
<text class="d" x="1488.700" y="624" textLength="137.300" lengthAdjust="spacingAndGlyphs">Drag data fields here</text>
<text class="w" x="1487.300" y="662.700" textLength="118.700" lengthAdjust="spacingAndGlyphs">Report level filters</text>
<text class="d" x="1488.700" y="701.700" textLength="137.300" lengthAdjust="spacingAndGlyphs">Drag data fields here</text>
<text class="h" x="1490" y="749" textLength="127.300" lengthAdjust="spacingAndGlyphs">DRILLTHROUGH</text>
<text class="w" x="1483.700" y="787.700" textLength="92" lengthAdjust="spacingAndGlyphs">Keep all filters</text>
<text class="w" x="1488.300" y="817.700" textLength="19" lengthAdjust="spacingAndGlyphs">On</text>
<path d="M1526 812.500h24M1526 815h24" stroke="#fff"/>
<circle cx="1555.700" cy="813.700" r="7.500" fill="#fff"/>
<text class="d" x="1488.700" y="855.700" textLength="186.300" lengthAdjust="spacingAndGlyphs">Drag drillthrough fields here</text>

<!-- Fields search -->
<rect x="1703.500" y="208.500" width="214" height="37" fill="#212121" stroke="#000"/>
<rect x="1698" y="251" width="221" height="1.500" fill="#353535"/>
<circle cx="1730.500" cy="226" r="6.500" fill="none" stroke="#aaa" stroke-width="1.200"/>
<path d="M1725.500 231l-7 6" stroke="#aaa" stroke-width="1.300"/>
<text x="1748.300" y="233.300" font-size="14.500" fill="#a0a0a0" textLength="46.700" lengthAdjust="spacingAndGlyphs">Search</text>

<!-- Fields list -->
<g clip-path="url(#fc)">
<!-- group headers -->
<path d="M1707 283l8-7v7z" fill="#8a8a8a"/>
<path d="M1707 463l8-7v7z" fill="#8a8a8a"/>
<path d="M1710 800l5.500 5-5.500 5zM1710 834l5.500 5-5.500 5zM1710 868l5.500 5-5.500 5zM1710 902l5.500 5-5.500 5zM1710 936l5.500 5-5.500 5zM1710 970l5.500 5-5.500 5z" fill="#9a9a9a"/>
<g fill="#8a8a8a">
<rect x="1729" y="272" width="3" height="17"/><rect x="1733" y="272" width="10" height="18"/>
<rect x="1729" y="452" width="3" height="17"/><rect x="1733" y="452" width="10" height="18"/>
<rect x="1729" y="798" width="3" height="17"/><rect x="1733" y="798" width="10" height="18"/>
<rect x="1729" y="832" width="3" height="17"/><rect x="1733" y="832" width="10" height="18"/>
<rect x="1729" y="866" width="3" height="17"/><rect x="1733" y="866" width="10" height="18"/>
<rect x="1729" y="900" width="3" height="17"/><rect x="1733" y="900" width="10" height="18"/>
<rect x="1729" y="934" width="3" height="17"/><rect x="1733" y="934" width="10" height="18"/>
<rect x="1729" y="968" width="3" height="17"/><rect x="1733" y="968" width="10" height="18"/>
</g>
<g stroke="#dcdcdc" stroke-dasharray="1.500 1" stroke-width="1.200">
<path d="M1735 282h6M1735 285h6M1735 288h6M1735 462h6M1735 465h6M1735 468h6M1735 808h6M1735 811h6M1735 814h6M1735 842h6M1735 845h6M1735 848h6M1735 876h6M1735 879h6M1735 882h6M1735 910h6M1735 913h6M1735 916h6M1735 944h6M1735 947h6M1735 950h6M1735 978h6"/>
</g>
<text class="f" x="1758.300" y="284.300" textLength="53.400" lengthAdjust="spacingAndGlyphs">1_Basics</text>
<text class="f" x="1758.300" y="464" textLength="74.400" lengthAdjust="spacingAndGlyphs">2_Calculate</text>
<text class="f" x="1758.300" y="810" textLength="126.700" lengthAdjust="spacingAndGlyphs">3_Time Intelligence</text>
<text class="f" x="1758.300" y="844" textLength="53.400" lengthAdjust="spacingAndGlyphs">4_Churn</text>
<text class="f" x="1758.300" y="878" textLength="105" lengthAdjust="spacingAndGlyphs">5_Semi Additive</text>
<text class="f" x="1758.300" y="912" textLength="74" lengthAdjust="spacingAndGlyphs">6_Variables</text>
<text class="f" x="1758.300" y="946" textLength="108.400" lengthAdjust="spacingAndGlyphs">7_Dynamic Rank</text>
<text class="f" x="1758.300" y="980" textLength="95" lengthAdjust="spacingAndGlyphs">8_All AllExcept</text>

<!-- pills -->
<g fill="#636363" stroke="#3a3a3a">
<rect x="1704" y="302.500" width="211" height="24" rx="4"/>
<rect x="1704" y="329.500" width="211" height="25.500" rx="4"/>
<rect x="1704" y="357.500" width="211" height="24" rx="4"/>
<rect x="1704" y="384.500" width="211" height="25.500" rx="4"/>
<rect x="1704" y="412.500" width="211" height="24.500" rx="4"/>
<rect x="1704" y="481.500" width="211" height="26" rx="4"/>
<rect x="1704" y="510" width="211" height="25" rx="4"/>
<rect x="1704" y="537" width="211" height="25.500" rx="4"/>
<rect x="1704" y="565" width="211" height="25" rx="4"/>
<rect x="1704" y="592" width="211" height="25.500" rx="4"/>
<rect x="1704" y="620" width="211" height="25" rx="4"/>
<rect x="1704" y="647" width="211" height="25.500" rx="4"/>
<rect x="1704" y="675" width="211" height="25" rx="4"/>
<rect x="1704" y="702" width="211" height="25.500" rx="4"/>
<rect x="1704" y="730" width="211" height="25" rx="4"/>
<rect x="1704" y="757.500" width="211" height="25" rx="4"/>
</g>
<!-- checkboxes -->
<g fill="#fff" stroke="#c4c4c4" stroke-width="2.500">
<rect x="1742.300" y="310.300" width="12.400" height="12.400"/>
<rect x="1742.300" y="336.800" width="12.400" height="12.400"/>
<rect x="1742.300" y="365.300" width="12.400" height="12.400"/>
<rect x="1742.300" y="391.800" width="12.400" height="12.400"/>
<rect x="1742.300" y="420.300" width="12.400" height="12.400"/>
<rect x="1742.300" y="489.300" width="12.400" height="12.400"/>
<rect x="1742.300" y="517.300" width="12.400" height="12.400"/>
<rect x="1742.300" y="544.800" width="12.400" height="12.400"/>
<rect x="1742.300" y="572.300" width="12.400" height="12.400"/>
<rect x="1742.300" y="599.800" width="12.400" height="12.400"/>
<rect x="1742.300" y="627.300" width="12.400" height="12.400"/>
<rect x="1742.300" y="654.800" width="12.400" height="12.400"/>
<rect x="1742.300" y="682.300" width="12.400" height="12.400"/>
<rect x="1742.300" y="709.800" width="12.400" height="12.400"/>
<rect x="1742.300" y="737.300" width="12.400" height="12.400"/>
<rect x="1742.300" y="764.800" width="12.400" height="12.400"/>
</g>
<!-- calc icons -->
<g fill="#8c8c8c">
<rect x="1762" y="308" width="11.500" height="15" rx="1"/>
<rect x="1762" y="335" width="11.500" height="15" rx="1"/>
<rect x="1762" y="363" width="11.500" height="15" rx="1"/>
<rect x="1762" y="390" width="11.500" height="15" rx="1"/>
<rect x="1762" y="418" width="11.500" height="15" rx="1"/>
<rect x="1762" y="487" width="11.500" height="15" rx="1"/>
<rect x="1762" y="515" width="11.500" height="15" rx="1"/>
<rect x="1762" y="543" width="11.500" height="15" rx="1"/>
<rect x="1762" y="570" width="11.500" height="15" rx="1"/>
<rect x="1762" y="598" width="11.500" height="15" rx="1"/>
<rect x="1762" y="625" width="11.500" height="15" rx="1"/>
<rect x="1762" y="653" width="11.500" height="15" rx="1"/>
<rect x="1762" y="680" width="11.500" height="15" rx="1"/>
<rect x="1762" y="708" width="11.500" height="15" rx="1"/>
<rect x="1762" y="735" width="11.500" height="15" rx="1"/>
<rect x="1762" y="763" width="11.500" height="15" rx="1"/>
</g>
<g stroke="#d8d8d8" stroke-width="4" stroke-dasharray="1 1" opacity=".8">
<path d="M1764.500 313.500h7M1764.500 340.500h7M1764.500 368.500h7M1764.500 395.500h7M1764.500 423.500h7M1764.500 492.500h7M1764.500 520.500h7M1764.500 548.500h7M1764.500 575.500h7M1764.500 603.500h7M1764.500 630.500h7M1764.500 658.500h7M1764.500 685.500h7M1764.500 713.500h7M1764.500 740.500h7M1764.500 768.500h7" stroke-dasharray="1.300 1"/>
</g>
<!-- equals lines -->
<g stroke="#eee" stroke-width="1.100">
<path d="M1783 312.500h8M1783 316h8M1783 319.500h8"/>
<path d="M1783 339.500h8M1783 343h8M1783 346.500h8"/>
<path d="M1783 367.500h8M1783 371h8M1783 374.500h8"/>
<path d="M1783 394.500h8M1783 398h8M1783 401.500h8"/>
<path d="M1783 422.500h8M1783 426h8M1783 429.500h8"/>
<path d="M1783 491.500h8M1783 495h8M1783 498.500h8"/>
<path d="M1783 519.500h8M1783 523h8M1783 526.500h8"/>
<path d="M1783 547.500h8M1783 551h8M1783 554.500h8"/>
<path d="M1783 574.500h8M1783 578h8M1783 581.500h8"/>
<path d="M1783 602.500h8M1783 606h8M1783 609.500h8"/>
<path d="M1783 629.500h8M1783 633h8M1783 636.500h8"/>
<path d="M1783 657.500h8M1783 661h8M1783 664.500h8"/>
<path d="M1783 684.500h8M1783 688h8M1783 691.500h8"/>
<path d="M1783 712.500h8M1783 716h8M1783 719.500h8"/>
<path d="M1783 739.500h8M1783 743h8M1783 746.500h8"/>
<path d="M1783 767.500h8M1783 771h8M1783 774.500h8"/>
</g>
<text class="f" x="1796" y="321" textLength="54" lengthAdjust="spacingAndGlyphs">Average</text>
<text class="f" x="1796" y="347.700" textLength="79" lengthAdjust="spacingAndGlyphs">Count Rows</text>
<text class="f" x="1796" y="376" textLength="87.300" lengthAdjust="spacingAndGlyphs">DistinctCou...</text>
<text class="f" x="1796" y="403" textLength="41.700" lengthAdjust="spacingAndGlyphs">Divide</text>
<text class="f" x="1796" y="430" textLength="29" lengthAdjust="spacingAndGlyphs">Sum</text>
<text class="f" x="1796" y="501" textLength="81" lengthAdjust="spacingAndGlyphs">Calculate All</text>
<text class="f" x="1796" y="528.300" textLength="84.700" lengthAdjust="spacingAndGlyphs">Calculate C...</text>
<text class="f" x="1796" y="556" textLength="84.700" lengthAdjust="spacingAndGlyphs">Calculate C...</text>
<text class="f" x="1796" y="583.300" textLength="90" lengthAdjust="spacingAndGlyphs">Calculate Ev...</text>
<text class="f" x="1796" y="611" textLength="90" lengthAdjust="spacingAndGlyphs">Calculate Ev...</text>
<text class="f" x="1796" y="638.300" textLength="90" lengthAdjust="spacingAndGlyphs">Calculate Ev...</text>
<text class="f" x="1796" y="666" textLength="90" lengthAdjust="spacingAndGlyphs">Calculate Ev...</text>
<text class="f" x="1796" y="693.300" textLength="90" lengthAdjust="spacingAndGlyphs">Calculate Ev...</text>
<text class="f" x="1796" y="721" textLength="91.300" lengthAdjust="spacingAndGlyphs">Calculate Se...</text>
<text class="f" x="1796" y="748.300" textLength="91.300" lengthAdjust="spacingAndGlyphs">Calculate Se...</text>
<text class="f" x="1796" y="776" textLength="90" lengthAdjust="spacingAndGlyphs">COUNTX Fo...</text>
<rect x="1916" y="263" width="3" height="496" fill="#6a6a6a"/>
</g>
<rect x="1471" y="981" width="448" height="2" fill="#343434"/>
<rect x="53" y="981" width="1418" height="2" fill="#3a3a3a"/>
</svg>
</body>
</html>
